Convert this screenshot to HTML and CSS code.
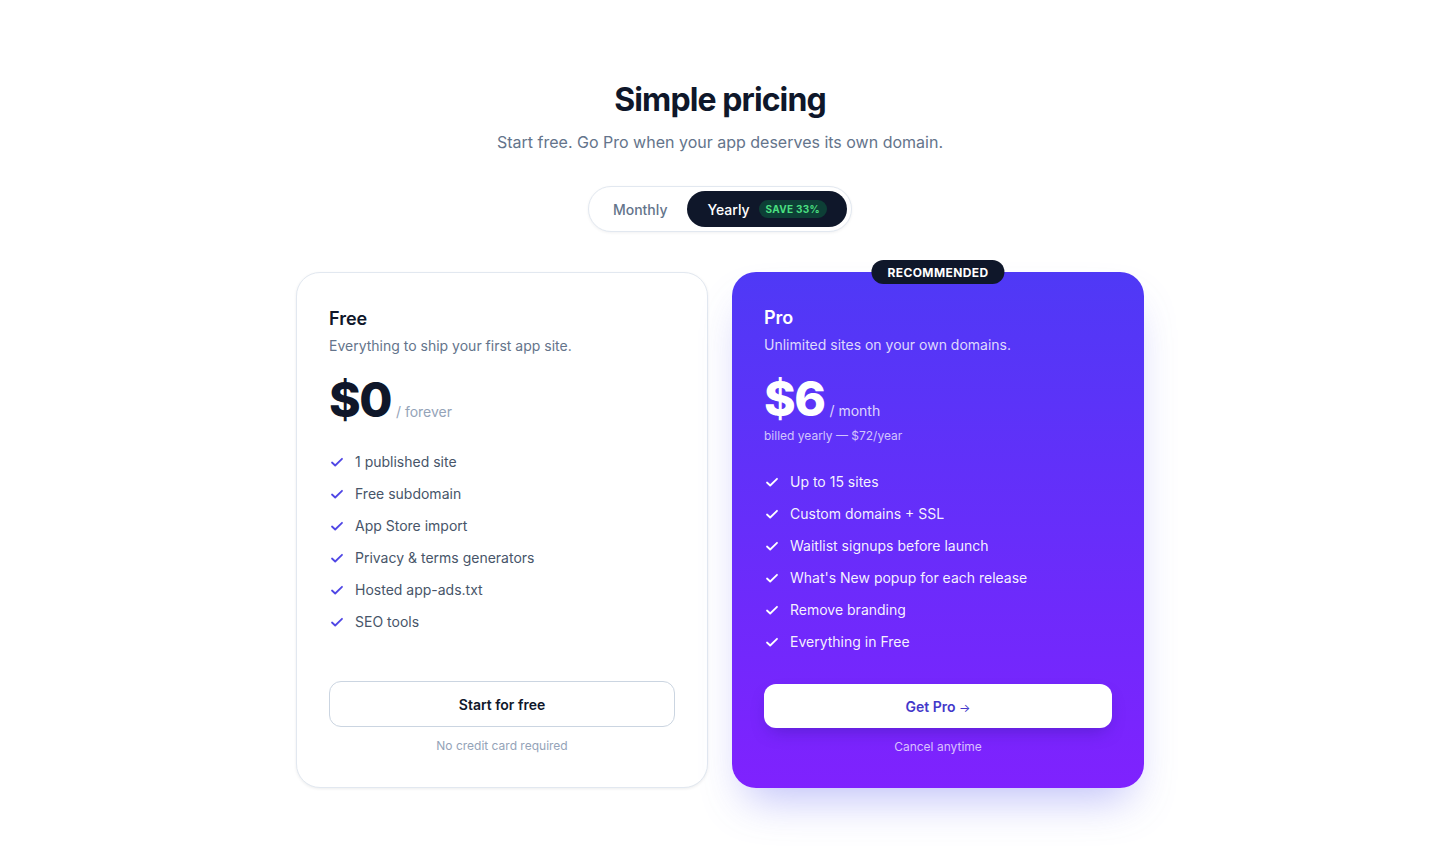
FILE: index.html
```html
<!DOCTYPE html>
<html lang="en">
<head>
<meta charset="utf-8">
<title>Simple pricing</title>
<link rel="stylesheet" href="styles.css">
</head>
<body>
<main class="page">
  <header class="intro">
    <h1 class="title">Simple pricing</h1>
    <p class="subtitle">Start free. Go Pro when your app deserves its own domain.</p>
  </header>

  <div class="toggle">
    <button class="toggle-btn">Monthly</button>
    <button class="toggle-btn active">Yearly <span class="save">SAVE 33%</span></button>
  </div>

  <section class="plans">
    <article class="card free">
      <h2 class="plan-name">Free</h2>
      <p class="plan-desc">Everything to ship your first app site.</p>
      <div class="price-block">
        <div class="price-row"><span class="price">$0</span><span class="per">/ forever</span></div>
      </div>
      <ul class="features">
        <li><svg class="check" viewBox="0 0 16 16"><path d="M3 8.5l3.2 3L13 4.8"/></svg>1 published site</li>
        <li><svg class="check" viewBox="0 0 16 16"><path d="M3 8.5l3.2 3L13 4.8"/></svg>Free subdomain</li>
        <li><svg class="check" viewBox="0 0 16 16"><path d="M3 8.5l3.2 3L13 4.8"/></svg>App Store import</li>
        <li><svg class="check" viewBox="0 0 16 16"><path d="M3 8.5l3.2 3L13 4.8"/></svg>Privacy &amp; terms generators</li>
        <li><svg class="check" viewBox="0 0 16 16"><path d="M3 8.5l3.2 3L13 4.8"/></svg>Hosted app-ads.txt</li>
        <li><svg class="check" viewBox="0 0 16 16"><path d="M3 8.5l3.2 3L13 4.8"/></svg>SEO tools</li>
      </ul>
      <div class="cta">
        <button class="btn btn-outline">Start for free</button>
        <p class="note">No credit card required</p>
      </div>
    </article>

    <article class="card pro">
      <span class="badge">RECOMMENDED</span>
      <h2 class="plan-name">Pro</h2>
      <p class="plan-desc">Unlimited sites on your own domains.</p>
      <div class="price-block">
        <div class="price-row"><span class="price">$6</span><span class="per">/ month</span></div>
        <p class="billed">billed yearly — $72/year</p>
      </div>
      <ul class="features">
        <li><svg class="check" viewBox="0 0 16 16"><path d="M3 8.5l3.2 3L13 4.8"/></svg>Up to 15 sites</li>
        <li><svg class="check" viewBox="0 0 16 16"><path d="M3 8.5l3.2 3L13 4.8"/></svg>Custom domains + SSL</li>
        <li><svg class="check" viewBox="0 0 16 16"><path d="M3 8.5l3.2 3L13 4.8"/></svg>Waitlist signups before launch</li>
        <li><svg class="check" viewBox="0 0 16 16"><path d="M3 8.5l3.2 3L13 4.8"/></svg>What's New popup for each release</li>
        <li><svg class="check" viewBox="0 0 16 16"><path d="M3 8.5l3.2 3L13 4.8"/></svg>Remove branding</li>
        <li><svg class="check" viewBox="0 0 16 16"><path d="M3 8.5l3.2 3L13 4.8"/></svg>Everything in Free</li>
      </ul>
      <div class="cta">
        <button class="btn btn-white">Get Pro <span class="arrow">→</span></button>
        <p class="note">Cancel anytime</p>
      </div>
    </article>
  </section>
</main>
</body>
</html>
```

FILE: styles.css
```css
* { box-sizing: border-box; }
html, body { margin: 0; padding: 0; background: #ffffff; }
body {
  font-family: Inter, "Noto Sans", "Liberation Sans", sans-serif;
  color: #0f172a;
  -webkit-font-smoothing: antialiased;
}
.page {
  display: flex;
  flex-direction: column;
  align-items: center;
  padding: 80px 0 60px;
}
.intro { text-align: center; }
.title {
  margin: 0;
  font-size: 32px;
  line-height: 40px;
  font-weight: 700;
  letter-spacing: -0.9px;
  color: #0f172a;
}
.subtitle {
  margin: 10px 0 0;
  font-size: 16px;
  line-height: 24px;
  color: #64748b;
}
.toggle {
  margin-top: 32px;
  display: flex;
  align-items: center;
  padding: 4px;
  border: 1px solid #e2e8f0;
  border-radius: 999px;
  background: #fff;
  box-shadow: 0 1px 3px rgba(15, 23, 42, 0.06);
}
.toggle-btn {
  font-family: inherit;
  border: 0;
  background: transparent;
  height: 36px;
  padding: 0 20px;
  border-radius: 999px;
  font-size: 14px;
  font-weight: 500;
  color: #64748b;
  display: flex;
  align-items: center;
  gap: 9px;
  cursor: pointer;
}
.toggle-btn.active {
  background: #0f172a;
  color: #ffffff;
}
.save {
  display: inline-flex;
  align-items: center;
  height: 18px;
  padding: 0 7px;
  border-radius: 999px;
  background: #0d3f36;
  color: #4ade80;
  font-size: 10px;
  font-weight: 700;
  letter-spacing: 0.3px;
}
.plans {
  margin-top: 40px;
  display: grid;
  grid-template-columns: 412px 412px;
  gap: 24px;
}
.card {
  position: relative;
  display: flex;
  flex-direction: column;
  border-radius: 24px;
  padding: 32px 32px 31px;
}
.free {
  border: 1px solid #e2e8f0;
  background: #fff;
  box-shadow: 0 1px 3px rgba(15, 23, 42, 0.08);
}
.pro {
  border: 0;
  color: #fff;
  background: linear-gradient(180deg, #4f39f6 0%, #7f22fe 100%);
  box-shadow: 0 24px 44px -14px rgba(99, 102, 241, 0.42);
}
.badge {
  position: absolute;
  top: -12px;
  left: 50%;
  transform: translateX(-50%);
  height: 24px;
  padding: 0 16px;
  display: flex;
  align-items: center;
  border-radius: 999px;
  background: #0f172a;
  color: #fff;
  font-size: 12px;
  font-weight: 700;
  letter-spacing: 0.4px;
  white-space: nowrap;
}
.plan-name {
  margin: 0;
  font-size: 18px;
  line-height: 28px;
  font-weight: 600;
}
.plan-desc {
  margin: 2px 0 0;
  font-size: 14px;
  line-height: 22px;
  color: #64748b;
}
.pro .plan-desc { color: rgba(255, 255, 255, 0.82); }
.price-block { margin-top: 19px; }
.price-row {
  display: flex;
  align-items: baseline;
  gap: 5px;
}
.price {
  font-size: 48px;
  line-height: 48px;
  font-weight: 800;
  letter-spacing: -1.5px;
}
.per {
  font-size: 14px;
  color: #94a3b8;
}
.pro .per { color: rgba(255, 255, 255, 0.8); }
.billed {
  margin: 4px 0 0;
  font-size: 12px;
  line-height: 18px;
  color: rgba(255, 255, 255, 0.72);
}
.features {
  list-style: none;
  margin: 27px 0 0;
  padding: 0;
  display: flex;
  flex-direction: column;
  gap: 10px;
}
.pro .features { margin-top: 26px; }
.features li {
  display: flex;
  align-items: center;
  gap: 10px;
  font-size: 14px;
  line-height: 22px;
  color: #475569;
}
.pro .features li { color: rgba(255, 255, 255, 0.94); }
.check {
  width: 16px;
  height: 16px;
  flex: none;
  fill: none;
  stroke: #4f46e5;
  stroke-width: 1.8;
  stroke-linecap: round;
  stroke-linejoin: round;
}
.pro .check { stroke: #ffffff; }
.cta {
  margin-top: auto;
  padding-top: 31px;
  display: flex;
  flex-direction: column;
}
.btn {
  font-family: inherit;
  width: 100%;
  border-radius: 12px;
  font-size: 14px;
  font-weight: 600;
  cursor: pointer;
}
.btn-outline {
  height: 46px;
  background: #fff;
  border: 1px solid #cbd5e1;
  color: #0f172a;
}
.btn-white {
  height: 44px;
  background: #fff;
  border: 0;
  color: #4338ca;
  box-shadow: 0 8px 18px -6px rgba(30, 20, 120, 0.35);
}
.arrow {
  font-weight: 400;
  font-size: 12px;
}
.note {
  margin: 9px 0 0;
  text-align: center;
  font-size: 12px;
  line-height: 20px;
  color: #94a3b8;
}
.pro .note { color: rgba(255, 255, 255, 0.72); margin-top: 9px; }
```
